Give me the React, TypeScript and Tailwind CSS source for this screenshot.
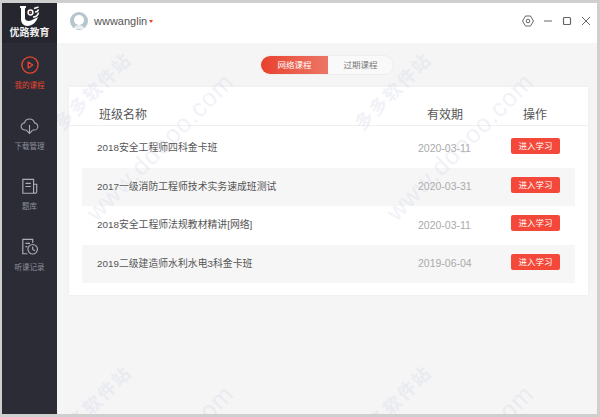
const cjk = "font-['Liberation_Sans','Noto_Sans_CJK_SC',sans-serif]";

const courses = [
  { name: "2018安全工程师四科金卡班", date: "2020-03-11" },
  { name: "2017一级消防工程师技术实务速成班测试", date: "2020-03-31" },
  { name: "2018安全工程师法规教材精讲[网络]", date: "2020-03-11" },
  { name: "2019二级建造师水利水电3科金卡班", date: "2019-06-04" },
];

// watermark centres, measured from the top-left of the main panel
const cnMarks = [
  { x: 37, y: 89 },
  { x: 337, y: 89 },
  { x: 37, y: 402 },
  { x: 337, y: 402 },
];

const urlMarks = [
  { x: 103, y: 144 },
  { x: 403, y: 144 },
  { x: 103, y: 456 },
  { x: 403, y: 456 },
];

function Logo() {
  return (
    <svg width="22" height="20" viewBox="0 0 22 20" fill="none">
      <path d="M1 0h6v1.500L6 2.500V12c0 2.500 3 3.500 6 2.500l7-3.500c-1.500 5-6 9-10.500 9C4.500 20 2 17 2 13V2.500L1 1.500z" fill="#fff" />
      <circle cx="11.500" cy="6.500" r="2.400" stroke="#fff" strokeWidth="1.500" />
      <circle cx="11.500" cy="6.500" r="0.800" fill="#e8452f" />
      <path d="M15 2.500l4.500-1.500M16 6c2 0 3-1 3.500-2.500M14 11c3 0 5-2 5.500-4.500" stroke="#fff" strokeWidth="1.400" />
    </svg>
  );
}

function PlayIcon() {
  return (
    <svg width="18" height="18" viewBox="0 0 20 20" fill="none" stroke="#e8452f" strokeWidth="1.500">
      <circle cx="10" cy="10" r="9" />
      <path d="M8 6.700v6.600l5-3.300z" strokeLinejoin="round" />
    </svg>
  );
}

function CloudIcon() {
  return (
    <svg width="19" height="18" viewBox="0 0 21 20" fill="none" stroke="#a9adb8" strokeWidth="1.200">
      <path d="M6.500 14.500H5.500a4 4 0 0 1-.5-8 5.700 5.700 0 0 1 11 0 4 4 0 0 1-.5 8h-1" strokeLinecap="round" />
      <path d="M10.500 9v9M7 14.700l3.500 3.500 3.500-3.500" />
    </svg>
  );
}

function BookIcon() {
  return (
    <svg width="18" height="17" viewBox="0 0 20 19" fill="none" stroke="#a9adb8" strokeWidth="1.300">
      <path d="M14 17H2V1.500h12zM14 7h3.500v8.500a1.700 1.700 0 0 1-3.500 0" />
      <path d="M5 6h6M5 9.500h6" />
    </svg>
  );
}

function HistoryIcon() {
  return (
    <svg width="18" height="18" viewBox="0 0 20 20" fill="none" stroke="#a9adb8" strokeWidth="1.300">
      <path d="M7 17.500H2V1.500h11v4" />
      <path d="M5 6h5M5 9.500h2" />
      <circle cx="13" cy="12.500" r="5.300" />
      <path d="M13 9.500v3.300l2.500 1.500" />
    </svg>
  );
}

function NavItem({ icon, label, active }: { icon: React.ReactNode; label: string; active?: boolean }) {
  return (
    <div className="flex h-[60.500px] flex-col items-center gap-[5px]">
      <div className="flex h-5 items-center justify-center">{icon}</div>
      <span className={`text-[7.500px] leading-3 ${active ? "text-[#e8452f]" : "text-[#8e919b]"}`}>{label}</span>
    </div>
  );
}

function Watermark({ text, x, y, wide }: { text: string; x: number; y: number; wide?: boolean }) {
  return (
    <span
      className={`pointer-events-none absolute -translate-x-1/2 -translate-y-1/2 -rotate-45 whitespace-nowrap text-[#c9cfe6] opacity-25 ${wide ? "text-[25px] tracking-[1px]" : "text-[18px] font-bold tracking-[2px]"}`}
      style={{ left: x, top: y }}
    >
      {text}
    </span>
  );
}

export default function App() {
  return (
    <div className={`flex h-[417px] w-[600px] overflow-hidden bg-[#cfcfcf] pt-[3px] pr-[3px] pb-[3px] pl-[2px] ${cjk}`}>
      <aside className="flex w-[55px] shrink-0 flex-col items-center bg-[#2b2c36]">
        <div className="flex h-[40px] w-full flex-col items-center bg-[#25262e] pt-[3px]">
          <Logo />
          <span className="mt-[1px] text-[10px] leading-[11px] font-bold text-[#eeeeee]">优路教育</span>
        </div>
        <div className="flex flex-col pt-[12px]">
          <NavItem icon={<PlayIcon />} label="我的课程" active />
          <NavItem icon={<CloudIcon />} label="下载管理" />
          <NavItem icon={<BookIcon />} label="题库" />
          <NavItem icon={<HistoryIcon />} label="听课记录" />
        </div>
      </aside>

      <main className="relative flex min-w-0 flex-1 flex-col overflow-hidden bg-[#f5f5f5]">
        <header className="flex h-[40px] shrink-0 items-center bg-white pr-[6px] pb-[4px] pl-[13px]">
          <svg width="18" height="18" viewBox="0 0 18 18">
            <circle cx="9" cy="9" r="9" fill="#b7c6cc" />
            <circle cx="9" cy="8" r="5" fill="#fff" />
            <path d="M3.500 17c1-3 3-4 5.500-4s4.500 1 5.500 4z" fill="#fff" opacity="0.700" />
          </svg>
          <span className="ml-[6px] text-[11px] text-[#555555]">wwwanglin</span>
          <span className="mt-[1px] ml-[2px] h-0 w-0 border-x-[2px] border-t-[3px] border-x-transparent border-t-[#e8452f]" />
          <div className="ml-auto flex items-center gap-[9px]">
            <svg width="12" height="12" viewBox="0 0 12 12" fill="none" stroke="#666" strokeWidth="1">
              <path d="M3.500 1h5L11.500 6l-3 5h-5L.5 6z" strokeLinejoin="round" />
              <circle cx="6" cy="6" r="1.800" />
            </svg>
            <svg width="10" height="10" viewBox="0 0 10 10" stroke="#666" strokeWidth="1">
              <path d="M1 5h8" />
            </svg>
            <svg width="10" height="10" viewBox="0 0 10 10" fill="none" stroke="#666" strokeWidth="1.200">
              <rect x="1.500" y="1.500" width="7" height="7" rx="1" />
            </svg>
            <svg width="10" height="10" viewBox="0 0 10 10" stroke="#666" strokeWidth="1">
              <path d="M1 1l8 8M9 1l-8 8" />
            </svg>
          </div>
        </header>

        <div className="flex justify-center pt-[12px]">
          <div className="flex h-[20px] w-[134px] overflow-hidden rounded-full border border-[#eeeeee] bg-[#f9f9f9] text-[8.500px] leading-[18px]">
            <div className="w-[67px] bg-gradient-to-r from-[#e8402c] to-[#ec7565] text-center text-white">网络课程</div>
            <div className="flex-1 text-center text-[#777777]">过期课程</div>
          </div>
        </div>

        <section className="mt-[12px] ml-[12px] h-[208px] w-[519px] bg-white shadow-[0_0_3px_rgba(0,0,0,0.05)]">
          <div className="flex h-[39px] items-center border-b border-[#f0f0f0] pt-[18px] pb-[1px] text-[12px] text-[#555555]">
            <div className="ml-[30px] flex-1">班级名称</div>
            <div className="w-[40px] text-center">有效期</div>
            <div className="mr-[33px] ml-[50px] w-[40px] text-center">操作</div>
          </div>
          <div className="mx-[13px] mt-[3px]">
            {courses.map((course, i) => (
              <div key={i} className={`flex h-[38.500px] items-center ${i % 2 === 1 ? "bg-[#f6f6f6]" : ""}`}>
                <div className="ml-[15px] flex-1 pt-[1px] text-[9.850px] text-[#555555]">{course.name}</div>
                <div className="ml-[33px] w-[60px] pt-[1px] text-[10.500px] text-[#aaaaaa]">{course.date}</div>
                <button className="mr-[15px] mb-[4px] ml-[33px] h-[16px] w-[49px] rounded-[2px] bg-[#f4493a] text-center text-[8.500px] leading-[16px] text-white">
                  进入学习
                </button>
              </div>
            ))}
          </div>
        </section>

        {cnMarks.map((m, i) => (
          <Watermark key={i} text="多多软件站" x={m.x} y={m.y} />
        ))}
        {urlMarks.map((m, i) => (
          <Watermark key={i} text="www.ddooo.com" x={m.x} y={m.y} wide />
        ))}
      </main>
    </div>
  );
}
